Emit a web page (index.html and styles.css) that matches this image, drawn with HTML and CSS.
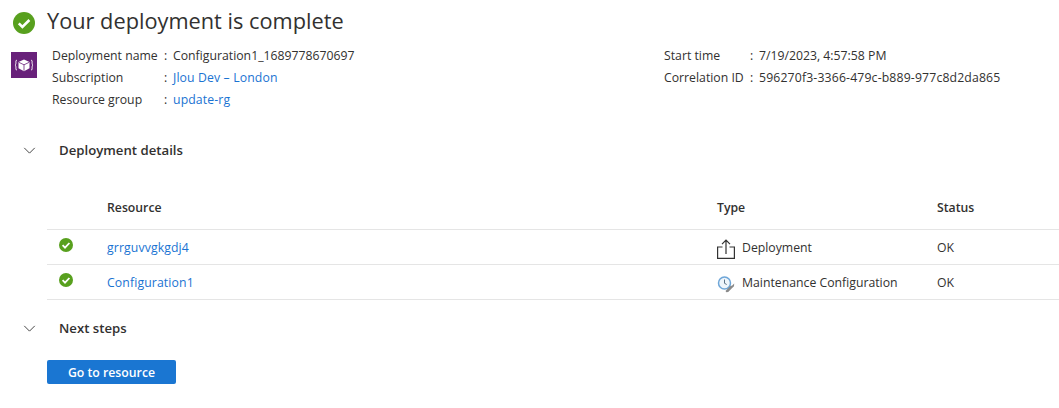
FILE: index.html
```html
<!DOCTYPE html>
<html lang="en">
<head>
    <meta charset="UTF-8">
    <meta name="viewport" content="width=device-width, initial-scale=1.0">
    <title>Deployment overview</title>
    <link rel="stylesheet" href="styles.css">
</head>
<body>
    <div class="title-row">
        <svg class="title-icon" viewBox="0 0 22 22">
            <circle cx="11" cy="11" r="11" fill="#58a01e"/>
            <path d="M5.800 11.400l3.600 3.600 7-7" fill="none" stroke="#fff" stroke-width="2.600"/>
        </svg>
        <h1>Your deployment is complete</h1>
    </div>

    <div class="summary">
        <svg class="deploy-icon" viewBox="0 0 26 26">
            <rect width="26" height="26" fill="#68217a"/>
            <path d="M13 7.500l5.500 2.600v6.200l-5.500 3-5.500-3v-6.200z" fill="#fff"/>
            <path d="M7.800 10.300l5.200 2.500 5.200-2.500M13 12.800v6" fill="none" stroke="#68217a" stroke-width=".8"/>
            <path d="M6 8.200c-1.300 0-1.100 1.100-1.100 2.400s-.3 2.300-.9 2.500c.6.200.9 1.200.9 2.500s-.2 2.400 1.100 2.400M20 8.200c1.300 0 1.100 1.100 1.100 2.400s.3 2.300.9 2.500c-.6.200-.9 1.200-.9 2.500s.2 2.400-1.100 2.400" fill="none" stroke="#fff" stroke-width="1"/>
        </svg>
        <div class="info info-left">
            <div class="info-label">Deployment name</div><div class="info-sep">:</div><div>Configuration1_1689778670697</div>
            <div class="info-label">Subscription</div><div class="info-sep">:</div><div><a href="#">Jlou Dev – London</a></div>
            <div class="info-label">Resource group</div><div class="info-sep">:</div><div><a href="#">update-rg</a></div>
        </div>
        <div class="info info-right">
            <div class="info-label">Start time</div><div class="info-sep">:</div><div>7/19/2023, 4:57:58 PM</div>
            <div class="info-label">Correlation ID</div><div class="info-sep">:</div><div class="guid">596270f3-3366-479c-b889-977c8d2da865</div>
        </div>
    </div>

    <div class="section-head details-head">
        <svg class="chevron" viewBox="0 0 14 8"><path d="M1 1l6 6 6-6" fill="none" stroke="#404040" stroke-width="1.100"/></svg>
        <h2>Deployment details</h2>
    </div>

    <div class="resource-table">
        <div class="table-row table-header">
            <div></div>
            <div>Resource</div>
            <div>Type</div>
            <div>Status</div>
        </div>
        <div class="table-row">
            <svg class="status-icon" viewBox="0 0 14 14">
                <circle cx="7" cy="7" r="7" fill="#58a01e"/>
                <path d="M3.600 7.200l2.400 2.400 4.400-4.600" fill="none" stroke="#fff" stroke-width="1.800"/>
            </svg>
            <div><a href="#">grrguvvgkgdj4</a></div>
            <div class="type-cell">
                <svg class="type-icon" viewBox="0 0 18 20">
                    <path d="M5.500 8H.6v11.400h16.800V8h-4.900" fill="none" stroke="#333" stroke-width="1.200"/>
                    <path d="M9 15V1.200M5 5.200l4-4 4 4" fill="none" stroke="#333" stroke-width="1.200"/>
                </svg>
                Deployment
            </div>
            <div>OK</div>
        </div>
        <div class="table-row">
            <svg class="status-icon" viewBox="0 0 14 14">
                <circle cx="7" cy="7" r="7" fill="#58a01e"/>
                <path d="M3.600 7.200l2.400 2.400 4.400-4.600" fill="none" stroke="#fff" stroke-width="1.800"/>
            </svg>
            <div><a href="#">Configuration1</a></div>
            <div class="type-cell">
                <svg class="type-icon" viewBox="0 0 18 20">
                    <circle cx="7.500" cy="9" r="6" fill="#eef5fb" stroke="#6ea6d8" stroke-width="1.500"/>
                    <path d="M7.500 5.500v3.800l2.200 1.200" fill="none" stroke="#5a7184" stroke-width="1"/>
                    <path d="M8.500 17l4.500-4.800 2.200-.6 2-2.100-.2 2.800-2.100 2-3.700 3.700-1.800.3z" fill="#8a8a8a"/>
                </svg>
                Maintenance Configuration
            </div>
            <div>OK</div>
        </div>
    </div>

    <div class="section-head next-head">
        <svg class="chevron" viewBox="0 0 14 8"><path d="M1 1l6 6 6-6" fill="none" stroke="#404040" stroke-width="1.100"/></svg>
        <h2>Next steps</h2>
    </div>

    <button class="primary-btn">Go to resource</button>
</body>
</html>
```

FILE: styles.css
```css
body {
    margin: 0;
    font-family: "Open Sans", "Noto Sans", sans-serif;
    font-size: 12.25px;
    color: #323130;
    background-color: #fff;
    overflow: hidden;
}
a {
    color: #1a73d2;
    text-decoration: none;
    letter-spacing: 0.12px;
}
.title-row {
    display: flex;
    align-items: center;
    gap: 12px;
    padding: 8px 0 0 13px;
    height: 30px;
}
.title-icon {
    width: 22px;
    height: 22px;
}
h1 {
    margin: 0 0 4px;
    font-size: 21.750px;
    font-weight: 400;
    line-height: 28px;
}
.summary {
    display: flex;
    padding: 6px 0 0 11px;
}
.deploy-icon {
    width: 26px;
    height: 26px;
    margin-top: 8px;
    margin-right: 15px;
}
.info {
    display: grid;
    grid-auto-rows: 22px;
    align-items: center;
    column-gap: 5px;
}
.info-left {
    width: 612px;
    grid-template-columns: 107px 4px 1fr;
}
.info-right {
    grid-template-columns: 81px 4px 1fr;
}
.guid {
    letter-spacing: 0.15px;
}
.section-head {
    display: flex;
    align-items: center;
    padding-left: 23px;
    height: 20px;
}
.details-head {
    margin-top: 30px;
}
.next-head {
    margin-top: 18px;
}
.chevron {
    width: 13px;
    height: 7px;
    margin-right: 23px;
}
h2 {
    margin: 0;
    font-size: 13.200px;
    font-weight: 600;
}
.resource-table {
    margin: 36px 0 0 47px;
}
.table-row {
    display: grid;
    grid-template-columns: 60px 610px 220px 1fr;
    align-items: center;
    height: 34px;
    border-bottom: 1px solid #e5e5e5;
}
.table-header {
    height: 22px;
    padding-bottom: 11px;
    font-weight: 600;
}
.status-icon {
    width: 14px;
    height: 14px;
    margin: -4px 0 0 12px;
}
.type-cell {
    display: flex;
    align-items: center;
    gap: 7px;
}
.type-icon {
    width: 18px;
    height: 20px;
    margin-top: 3px;
}
.primary-btn {
    display: block;
    width: 129px;
    height: 24px;
    margin: 22px 0 0 47px;
    padding: 0;
    border: none;
    border-radius: 2px;
    background-color: #1a76d2;
    color: #fff;
    font-family: inherit;
    font-size: 12.25px;
    font-weight: 600;
}
```
